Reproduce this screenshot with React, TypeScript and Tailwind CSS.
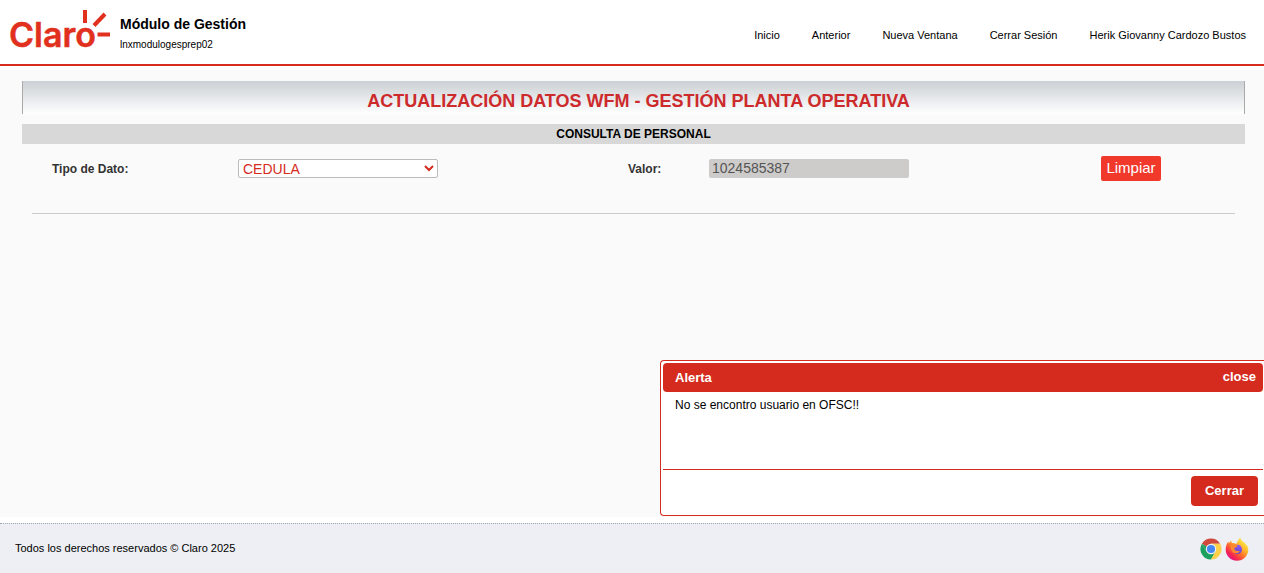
import { useState } from "react";

const NAV_LINKS = [
  "Inicio",
  "Anterior",
  "Nueva Ventana",
  "Cerrar Sesión",
  "Herik Giovanny Cardozo Bustos",
];

function ClaroLogo() {
  return (
    <svg
      width="102"
      height="42"
      viewBox="0 0 102 42"
      role="img"
      aria-label="Claro"
      className="shrink-0 overflow-visible"
    >
      <text
        x="-1"
        y="37"
        fill="#e1301e"
        stroke="#e1301e"
        strokeWidth="0.5"
        fontFamily="Inter, 'Liberation Sans', sans-serif"
        fontWeight="600"
        fontSize="34"
      >
        Claro
      </text>
      <g stroke="#e1301e" strokeWidth="4">
        <path d="M75 0v13" />
        <path d="M84 15.5L95 4" />
        <path d="M87.5 24.5h12.5" />
      </g>
    </svg>
  );
}

function ChromeIcon() {
  return (
    <svg width="22" height="22" viewBox="0 0 22 22" role="img" aria-label="Chrome">
      <path d="M11 11L1.9 5.75A10.5 10.5 0 0 1 20.1 5.75H11Z" fill="#d0493b" />
      <path d="M1.9 5.75A10.5 10.5 0 0 0 11 21.5L15.55 13.6 11 11 6.45 13.6Z" fill="#1ba05d" />
      <path d="M11 5.75H20.1A10.5 10.5 0 0 1 11 21.5L15.55 13.6Z" fill="#fdd04a" />
      <path d="M1.9 5.75L6.45 13.6 11 11Z" fill="#1ba05d" />
      <circle cx="11" cy="11" r="5.2" fill="#f2f2f2" />
      <circle cx="11" cy="11" r="4.1" fill="#4688f1" />
    </svg>
  );
}

function FirefoxIcon() {
  return (
    <svg width="24" height="24" viewBox="0 0 24 24" role="img" aria-label="Firefox">
      <defs>
        <linearGradient id="fox" x1="0.85" y1="0.1" x2="0.2" y2="0.9">
          <stop offset="0" stopColor="#fff44f" />
          <stop offset="0.35" stopColor="#ffb32c" />
          <stop offset="0.6" stopColor="#ff6b2d" />
          <stop offset="0.85" stopColor="#f5264e" />
          <stop offset="1" stopColor="#e31587" />
        </linearGradient>
        <linearGradient id="globe" x1="0.7" y1="0" x2="0.3" y2="1">
          <stop offset="0" stopColor="#9059ff" />
          <stop offset="1" stopColor="#5b3fc0" />
        </linearGradient>
      </defs>
      <path
        d="M15.2 0.5C16 4 19 4.8 20.8 7.2C22.6 9 23.3 10.5 23.3 12.6A11.3 11.1 0 0 1 0.7 12.6C0.7 9.5 1.6 7 3.3 4.6L3.7 6.6C4.3 5.6 5.4 4.4 6.3 3.7L6.7 6.1C8.5 5.9 9.8 6.2 11 7C12.5 5.6 13.2 2 15.2 0.5Z"
        fill="url(#fox)"
      />
      <circle cx="12.3" cy="12.4" r="4.7" fill="url(#globe)" />
      <path
        d="M5.6 7.3C8 6.2 10.7 6.8 12 8.4C13 9.2 12 10.1 10.1 10.5C9.4 11.1 9.1 12 9.9 13.1C11.3 14.5 13.4 13.8 14.8 13.9C14.1 15.7 12 16.6 9.9 16.2C6.4 15.3 5 11.2 5.6 7.3Z"
        fill="#ff8a30"
      />
    </svg>
  );
}

function Header() {
  return (
    <header className="flex min-h-[66px] items-start justify-between border-b-2 border-[#d52b1e] bg-white px-[10px]">
      <div className="flex gap-2 pt-[10px]">
        <ClaroLogo />
        <div className="pt-1">
          <h1 className="text-[14px] leading-5 font-bold">Módulo de Gestión</h1>
          <p className="text-[10px] leading-[22px]">lnxmodulogesprep02</p>
        </div>
      </div>
      <nav className="flex gap-8 pt-[25px] pr-2 text-[11px] leading-5">
        {NAV_LINKS.map((label) => (
          <a key={label} href="#">
            {label}
          </a>
        ))}
      </nav>
    </header>
  );
}

function SearchForm() {
  const [type, setType] = useState("CEDULA");
  const [value, setValue] = useState("1024585387");
  return (
    <form
      className="mx-[10px] grid grid-cols-[206fr_390fr_81fr_392fr_134fr] items-center border-b border-[#cccccc] pt-3 pb-8 text-[12px] text-[#333333]"
      onSubmit={(e) => e.preventDefault()}
    >
      <label htmlFor="tipo" className="pl-5 font-bold">
        Tipo de Dato:
      </label>
      <select
        id="tipo"
        value={type}
        onChange={(e) => setType(e.target.value)}
        className="h-[19px] w-[200px] rounded-[2px] border border-[#bbbbbb] bg-white text-[14px] leading-4 text-[#d52b1e]"
      >
        <option>CEDULA</option>
      </select>
      <label htmlFor="valor" className="font-bold">
        Valor:
      </label>
      <input
        id="valor"
        value={value}
        disabled
        className="h-[19px] w-[200px] rounded-[2px] bg-[#cecccb] px-[3px] text-[14px] text-[#545454]"
      />
      <button
        type="button"
        onClick={() => setValue("")}
        className="h-[25px] w-[60px] rounded-[2px] bg-[#f0382b] text-[15px] text-white"
      >
        Limpiar
      </button>
    </form>
  );
}

function AlertDialog({ onClose }: { onClose: () => void }) {
  return (
    <div
      role="dialog"
      aria-labelledby="alert-title"
      className="absolute right-0 bottom-[57px] w-[604px] max-w-full rounded-l-[4px] border border-r-0 border-[#d52b1e] bg-white py-[2px] pr-px pl-[2px]"
    >
      <div className="flex h-[29px] items-center justify-between rounded-[4px] bg-[#d52b1e] pr-[7px] pl-3 text-[13px] font-bold text-white">
        <h2 id="alert-title">Alerta</h2>
        <button type="button" onClick={onClose} className="pb-px">
          close
        </button>
      </div>
      <p className="min-h-[77px] px-3 pt-1 text-[12px] leading-[18px]">
        No se encontro usuario en OFSC!!
      </p>
      <div className="flex justify-end border-t border-[#d52b1e] pt-[6px] pr-[5px] pb-[7px]">
        <button
          type="button"
          onClick={onClose}
          className="h-[30px] w-[67px] rounded-[4px] bg-[#d52b1e] text-[13px] font-bold text-white"
        >
          Cerrar
        </button>
      </div>
    </div>
  );
}

export default function App() {
  const [open, setOpen] = useState(true);
  return (
    <div className="relative flex min-h-screen flex-col bg-white font-['Liberation_Sans',Arial,sans-serif] text-black">
      <Header />
      <main className="mt-1 mb-[6px] flex-1 bg-[#fafafa] pt-[11px] pr-[19px] pl-[22px]">
        <h2 className="h-[33px] border-x border-[#aaaaaa] bg-linear-to-b from-[#cbd0d4] to-white pt-[6px] pl-[10px] text-center text-[18px] leading-7 font-bold text-[#cd2a2c]">
          ACTUALIZACIÓN DATOS WFM - GESTIÓN PLANTA OPERATIVA
        </h2>
        <h3 className="mt-[10px] bg-[#d8d8d8] text-center text-[12px] leading-5 font-bold">
          CONSULTA DE PERSONAL
        </h3>
        <SearchForm />
      </main>
      <footer className="flex h-[50px] items-center justify-between border-t border-dotted border-[#9aa5b5] bg-[#edeff4] px-[15px] text-[11px]">
        <p>Todos los derechos reservados © Claro 2025</p>
        <div className="flex items-center gap-[3px]">
          <ChromeIcon />
          <FirefoxIcon />
        </div>
      </footer>
      {open && <AlertDialog onClose={() => setOpen(false)} />}
    </div>
  );
}
